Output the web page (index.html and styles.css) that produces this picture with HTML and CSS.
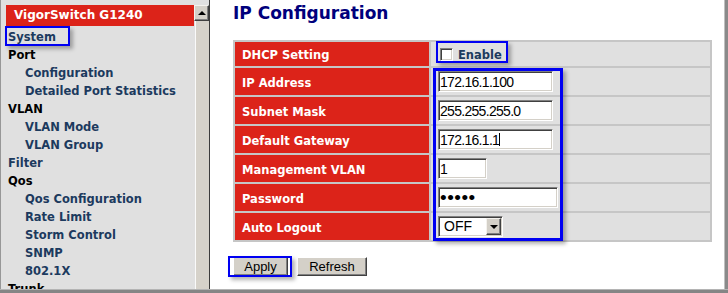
FILE: index.html
```html
<!DOCTYPE html>
<html lang="en">
<head>
    <meta charset="UTF-8">
    <meta name="viewport" content="width=device-width, initial-scale=1.0">
    <title>IP Configuration</title>
    <link rel="stylesheet" href="styles.css">
</head>
<body>

<div class="window">
    <div class="frames">
        <div class="menu-frame">
            <div class="menu">
                <div class="menu-title">VigorSwitch G1240</div>
                <a class="item">System</a>
                <div class="item group">Port</div>
                <a class="item sub">Configuration</a>
                <a class="item sub">Detailed Port Statistics</a>
                <div class="item group">VLAN</div>
                <a class="item sub">VLAN Mode</a>
                <a class="item sub">VLAN Group</a>
                <a class="item">Filter</a>
                <div class="item group">Qos</div>
                <a class="item sub">Qos Configuration</a>
                <a class="item sub">Rate Limit</a>
                <a class="item sub">Storm Control</a>
                <a class="item sub">SNMP</a>
                <a class="item sub">802.1X</a>
                <div class="item group">Trunk</div>
            </div>
            <div class="scrollbar">
                <div class="scroll-btn"><span class="arrow-up"></span></div>
                <div class="scroll-track"></div>
            </div>
        </div>

        <div class="content">
            <h2>IP Configuration</h2>

            <table class="config">
                <tr class="first">
                    <th>DHCP Setting</th>
                    <td>
                        <label class="enable"><input type="checkbox" class="check"> Enable</label>
                    </td>
                </tr>
                <tr>
                    <th>IP Address</th>
                    <td><input type="text" class="field" value="172.16.1.100"></td>
                </tr>
                <tr>
                    <th>Subnet Mask</th>
                    <td><input type="text" class="field" value="255.255.255.0"></td>
                </tr>
                <tr>
                    <th>Default Gateway</th>
                    <td>
                        <span class="caret-wrap"><input type="text" class="field" value="172.16.1.1"></span>
                    </td>
                </tr>
                <tr>
                    <th>Management VLAN</th>
                    <td><input type="text" class="field field-short" value="1"></td>
                </tr>
                <tr>
                    <th>Password</th>
                    <td><input type="password" class="field field-pass" value="12345"></td>
                </tr>
                <tr>
                    <th>Auto Logout</th>
                    <td>
                        <div class="select">
                            <span class="select-value">OFF</span>
                            <span class="select-arrow"><span class="arrow-down"></span></span>
                        </div>
                    </td>
                </tr>
            </table>

            <div class="actions">
                <button type="button" class="btn btn-apply">Apply</button>
                <button type="button" class="btn btn-refresh">Refresh</button>
            </div>
        </div>
    </div>
    <div class="bottom-bar"></div>

    <!-- highlight boxes drawn over the page -->
    <div class="mark mark-system"></div>
    <div class="mark mark-enable"></div>
    <div class="mark mark-fields"></div>
    <div class="mark mark-apply"></div>
</div>

</body>
</html>
```

FILE: styles.css
```css
body {
    margin: 0;
    font-family: "DejaVu Sans", Verdana, sans-serif;
    background-color: #fff;
}
.window {
    position: relative;
    width: 728px;
    height: 293px;
    overflow: hidden;
}
.frames {
    display: flex;
    height: 289px;
}

/* left menu frame */
.menu-frame {
    display: flex;
    width: 210px;
    flex-shrink: 0;
    box-sizing: border-box;
    border-left: 1px solid #979797;
    background-color: #e0e0e0;
}
.menu {
    flex: 1;
    padding-top: 5px;
    overflow: hidden;
}
.menu-title {
    height: 21px;
    margin: 0 0 1px 5px;
    padding-left: 8px;
    line-height: 21px;
    background-color: #dc2319;
    color: #fff;
    font-size: 12px;
    font-weight: bold;
}
.item {
    display: block;
    height: 18px;
    padding-left: 7px;
    line-height: 20px;
    font-size: 11.5px;
    font-weight: bold;
    color: #1c3a5e;
    white-space: nowrap;
}
.item.group {
    color: #000;
}
.item.sub {
    padding-left: 24px;
}
.scrollbar {
    display: flex;
    flex-direction: column;
    width: 15px;
    padding-top: 5px;
    border-right: 1px solid #3c3c3c;
}
.scroll-btn {
    display: flex;
    align-items: center;
    justify-content: center;
    height: 16px;
    box-sizing: border-box;
    background-color: #d4d0c8;
    border: 1px solid;
    border-color: #f4f2ee #404040 #404040 #f4f2ee;
    box-shadow: inset -1px -1px 0 #808080;
}
.arrow-up {
    width: 0;
    height: 0;
    border-left: 4px solid transparent;
    border-right: 4px solid transparent;
    border-bottom: 4px solid #000;
}
.scroll-track {
    flex: 1;
    margin-left: 1px;
    background-color: #d6d2ca;
    border-left: 1px solid #fafafa;
}

/* right content frame */
.content {
    flex: 1;
    padding-left: 23px;
    border-right: 3px solid #8a8a8a;
    box-shadow: inset -1px 0 0 #c0c0c0;
}
h2 {
    margin: 0;
    padding-top: 3px;
    font-size: 17px;
    line-height: 20px;
    color: #00007c;
}
.config {
    margin-top: 17px;
    width: 479px;
    table-layout: fixed;
    border-spacing: 2px;
    background-color: #c6c6c6;
}
.config th, .config td {
    height: 27px;
    padding: 0 0 0 7px;
    box-sizing: border-box;
}
.config .first th, .config .first td {
    height: 24px;
}
.config th {
    width: 194px;
    padding-top: 2px;
    text-align: left;
    background-color: #dc2319;
    color: #fff;
    font-size: 11.5px;
}
.config td {
    background-color: #e0e0e0;
}
.enable {
    display: flex;
    align-items: center;
    gap: 5px;
    padding-top: 1px;
    font-size: 11.5px;
    font-weight: bold;
    color: #1c3a5e;
}
.check {
    appearance: none;
    width: 13px;
    height: 13px;
    margin: 0 0 0 2px;
    box-sizing: border-box;
    background-color: #fff;
    border: 1px solid;
    border-color: #808080 #fff #fff #808080;
    box-shadow: inset 1px 1px 0 #404040, inset -1px -1px 0 #d4d0c8;
}
.field, .select {
    display: block;
    box-sizing: border-box;
    width: 115px;
    height: 21px;
    margin: 0;
    padding: 0 1px;
    background-color: #fff;
    border: 1px solid;
    border-color: #808080 #fff #fff #808080;
    box-shadow: inset 1px 1px 0 #404040, inset -1px -1px 0 #d4d0c8;
    font-family: "Liberation Sans", Arial, sans-serif;
    font-size: 14px;
    letter-spacing: -0.7px;
    color: #000;
    outline: none;
}
.caret-wrap {
    position: relative;
    display: block;
    width: 115px;
}
.caret-wrap::after {
    content: "";
    position: absolute;
    left: 61px;
    top: 4px;
    width: 1px;
    height: 13px;
    background-color: #000;
}
.field-short {
    width: 49px;
}
.field-pass {
    width: 120px;
    font-size: 19px;
    letter-spacing: 0.5px;
}
.select {
    display: flex;
    width: 65px;
    padding: 1px;
    letter-spacing: 0;
}
.select-value {
    flex: 1;
    padding-left: 4px;
    line-height: 17px;
}
.select-arrow {
    display: flex;
    align-items: center;
    justify-content: center;
    width: 15px;
    box-sizing: border-box;
    background-color: #d4d0c8;
    border: 1px solid;
    border-color: #f4f2ee #404040 #404040 #f4f2ee;
    box-shadow: inset -1px -1px 0 #808080;
}
.arrow-down {
    width: 0;
    height: 0;
    border-left: 4px solid transparent;
    border-right: 4px solid transparent;
    border-top: 4px solid #000;
}
.actions {
    display: flex;
    gap: 9px;
    margin-top: 15px;
}
.btn {
    height: 19px;
    padding: 0;
    box-sizing: border-box;
    background-color: #d4d0c8;
    border: 1px solid;
    border-color: #fff #404040 #404040 #fff;
    box-shadow: inset -1px -1px 0 #808080;
    font-family: "Liberation Sans", Arial, sans-serif;
    font-size: 13px;
    color: #000;
}
.btn-apply {
    width: 55px;
}
.btn-refresh {
    width: 70px;
}
.bottom-bar {
    height: 3px;
    border-top: 1px solid #b4b4b4;
    background-color: #858585;
}

/* blue highlight boxes */
.mark {
    position: absolute;
    box-sizing: border-box;
    border: 2px solid #0000f2;
    box-shadow: 3px 3px 4px rgba(0, 0, 0, 0.3);
    pointer-events: none;
}
.mark-system {
    left: 5px;
    top: 26px;
    width: 65px;
    height: 20px;
}
.mark-enable {
    left: 436px;
    top: 41px;
    width: 72px;
    height: 22px;
}
.mark-fields {
    left: 433px;
    top: 68px;
    width: 130px;
    height: 173px;
    border-width: 3px;
}
.mark-apply {
    left: 228px;
    top: 256px;
    width: 64px;
    height: 21px;
}
```
